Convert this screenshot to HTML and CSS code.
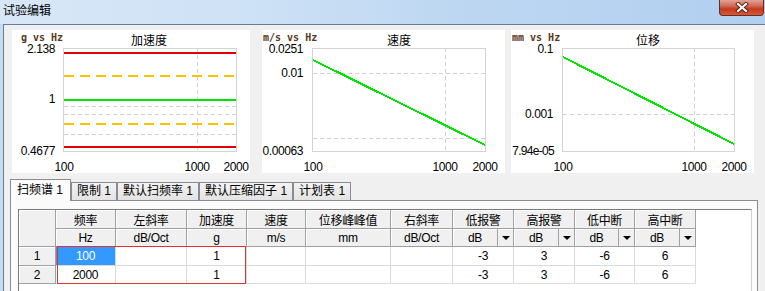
FILE: index.html
```html
<!DOCTYPE html>
<html lang="zh-CN">
<head>
    <meta charset="UTF-8">
    <title>试验编辑</title>
    <link rel="stylesheet" href="styles.css">
</head>
<body>

<div class="window">
    <div class="titlebar">
        <span class="title">试验编辑</span>
        <div class="close">
            <svg width="16" height="11" viewBox="0 0 16 11">
                <path d="M4 2 L12 9 M12 2 L4 9" stroke="#5a2018" stroke-width="4" stroke-linecap="square"/>
                <path d="M4 2 L12 9 M12 2 L4 9" stroke="#fff" stroke-width="2.2" stroke-linecap="square"/>
            </svg>
        </div>
    </div>

    <div class="client">
        <div class="charts">
            <!-- acceleration -->
            <div class="chart chart-acc">
                <svg width="238" height="143">
                    <text class="unit" x="9" y="11">g vs Hz</text>
                    <text class="ctitle" x="137" y="15">加速度</text>
                    <g class="grid-lines">
                        <line x1="185.5" y1="18" x2="185.5" y2="121" class="dash"/>
                        <line x1="52" y1="76.5" x2="224" y2="76.5" class="dash"/>
                        <line x1="52" y1="84.5" x2="224" y2="84.5" class="dash"/>
                        <line x1="52" y1="104.5" x2="224" y2="104.5" class="dash"/>
                    </g>
                    <rect x="51.5" y="18.5" width="173" height="103" class="frame"/>
                    <line x1="52" y1="23" x2="224" y2="23" class="limit"/>
                    <line x1="52" y1="117" x2="224" y2="117" class="limit"/>
                    <line x1="52" y1="46" x2="224" y2="46" class="alarm"/>
                    <line x1="52" y1="94" x2="224" y2="94" class="alarm"/>
                    <line x1="52" y1="70" x2="224" y2="70" class="profile"/>
                    <text class="ylabel" x="43" y="23">2.138</text>
                    <text class="ylabel" x="43" y="73">1</text>
                    <text class="ylabel" x="43" y="125">0.4677</text>
                    <text class="xlabel" x="52" y="141">100</text>
                    <text class="xlabel" x="185" y="141">1000</text>
                    <text class="xlabel" x="224" y="141">2000</text>
                </svg>
            </div>

            <!-- velocity -->
            <div class="chart chart-vel">
                <svg width="243" height="143">
                    <text class="unit" x="1" y="11">m/s vs Hz</text>
                    <text class="ctitle" x="137" y="15">速度</text>
                    <line x1="183.5" y1="18" x2="183.5" y2="121" class="dash"/>
                    <line x1="51" y1="43.5" x2="223" y2="43.5" class="dash"/>
                    <line x1="51" y1="108.5" x2="223" y2="108.5" class="dash"/>
                    <rect x="50.5" y="18.5" width="173" height="103" class="frame"/>
                    <line x1="51" y1="30" x2="223" y2="115" class="profile slope"/>
                    <text class="ylabel" x="41" y="23">0.0251</text>
                    <text class="ylabel" x="41" y="47">0.01</text>
                    <text class="ylabel" x="41" y="125">0.00063</text>
                    <text class="xlabel" x="51" y="141">100</text>
                    <text class="xlabel" x="183" y="141">1000</text>
                    <text class="xlabel" x="223" y="141">2000</text>
                </svg>
            </div>

            <!-- displacement -->
            <div class="chart chart-disp">
                <svg width="243" height="143">
                    <text class="unit" x="1" y="11">mm vs Hz</text>
                    <text class="ctitle" x="137" y="15">位移</text>
                    <line x1="183.5" y1="18" x2="183.5" y2="121" class="dash"/>
                    <line x1="52" y1="84.5" x2="223" y2="84.5" class="dash"/>
                    <rect x="51.5" y="18.5" width="172" height="103" class="frame"/>
                    <line x1="52" y1="27" x2="223" y2="114" class="profile slope"/>
                    <text class="ylabel" x="42" y="23">0.1</text>
                    <text class="ylabel" x="42" y="88">0.001</text>
                    <text class="ylabel tight" x="43" y="125">7.94e-05</text>
                    <text class="xlabel" x="52" y="141">100</text>
                    <text class="xlabel" x="183" y="141">1000</text>
                    <text class="xlabel" x="223" y="141">2000</text>
                </svg>
            </div>
        </div>

        <div class="tabs">
            <div class="tab active">扫频谱 1</div>
            <div class="tab">限制 1</div>
            <div class="tab">默认扫频率 1</div>
            <div class="tab">默认压缩因子 1</div>
            <div class="tab">计划表 1</div>
        </div>

        <div class="tabpage">
            <div class="sheet">
                <div class="cell head corner"></div>
                <div class="cell head">频率</div>
                <div class="cell head">左斜率</div>
                <div class="cell head">加速度</div>
                <div class="cell head">速度</div>
                <div class="cell head">位移峰峰值</div>
                <div class="cell head">右斜率</div>
                <div class="cell head">低报警</div>
                <div class="cell head">高报警</div>
                <div class="cell head">低中断</div>
                <div class="cell head">高中断</div>

                <div class="cell head">Hz</div>
                <div class="cell head">dB/Oct</div>
                <div class="cell head">g</div>
                <div class="cell head">m/s</div>
                <div class="cell head">mm</div>
                <div class="cell head">dB/Oct</div>
                <div class="cell head drop-cell"><span>dB</span><i class="drop"></i></div>
                <div class="cell head drop-cell"><span>dB</span><i class="drop"></i></div>
                <div class="cell head drop-cell"><span>dB</span><i class="drop"></i></div>
                <div class="cell head drop-cell"><span>dB</span><i class="drop"></i></div>

                <div class="cell head rowhead">1</div>
                <div class="cell selected">100</div>
                <div class="cell"></div>
                <div class="cell">1</div>
                <div class="cell"></div>
                <div class="cell"></div>
                <div class="cell"></div>
                <div class="cell">-3</div>
                <div class="cell">3</div>
                <div class="cell">-6</div>
                <div class="cell">6</div>

                <div class="cell head rowhead">2</div>
                <div class="cell">2000</div>
                <div class="cell"></div>
                <div class="cell">1</div>
                <div class="cell"></div>
                <div class="cell"></div>
                <div class="cell"></div>
                <div class="cell">-3</div>
                <div class="cell">3</div>
                <div class="cell">-6</div>
                <div class="cell">6</div>

                <div class="selection"></div>
            </div>
        </div>
    </div>
</div>

</body>
</html>
```

FILE: styles.css
```css
body {
    margin: 0;
    font-family: "Liberation Sans", "Noto Sans CJK SC", sans-serif;
    font-size: 12px;
    color: #000;
}
.window {
    width: 765px;
    height: 291px;
    overflow: hidden;
    background: #c8dcf1;
}
.titlebar {
    height: 24px;
    display: flex;
    justify-content: space-between;
    align-items: flex-start;
    background: linear-gradient(to right, #d8e7f7 0%, #cfe2f6 30%, #bdd7f2 60%, #b2cff0 100%);
}
.title {
    font-family: "Noto Sans CJK SC", sans-serif;
    font-size: 12px;
    line-height: 20px;
    padding-left: 3px;
}
.close {
    width: 43px;
    height: 15px;
    margin-right: 1px;
    border: 1px solid #6b2a20;
    border-top: none;
    border-radius: 0 0 4px 4px;
    background: linear-gradient(#e3a294 0%, #d26a56 40%, #c2391f 60%, #d9583a 100%);
    display: flex;
    align-items: center;
    justify-content: center;
}
.client {
    margin-left: 3px;
    height: 267px;
    border-left: 1px solid #6c7d90;
    border-top: 1px solid #6c7d90;
    background: #f0f0f0;
}

/* charts */
.charts {
    display: flex;
    padding: 5px 0 0 8px;
}
.chart {
    height: 143px;
    background: #fff;
}
.chart svg {
    display: block;
}
.chart-vel {
    margin-left: 12px;
}
.chart-disp {
    margin-left: 6px;
}
.unit {
    font-family: "DejaVu Sans Mono", monospace;
    font-size: 10px;
    font-weight: bold;
    fill: #5a3818;
}
.ctitle {
    font-family: "Noto Sans CJK SC", sans-serif;
    font-size: 12px;
    text-anchor: middle;
}
.ylabel {
    font-size: 12px;
    letter-spacing: -0.4px;
    text-anchor: end;
}
.ylabel.tight {
    letter-spacing: -0.7px;
}
.xlabel {
    font-size: 12px;
    letter-spacing: -0.4px;
    text-anchor: middle;
}
.frame {
    fill: none;
    stroke: #d4d4d4;
    shape-rendering: crispEdges;
}
.dash {
    stroke: #d2d2d2;
    stroke-dasharray: 4 3;
    shape-rendering: crispEdges;
}
.limit {
    stroke: #e00000;
    stroke-width: 2;
    shape-rendering: crispEdges;
}
.alarm {
    stroke: #ffc000;
    stroke-width: 2;
    stroke-dasharray: 10 6;
    shape-rendering: crispEdges;
}
.profile {
    stroke: #00e600;
    stroke-width: 2;
    shape-rendering: crispEdges;
}

/* tabs */
.tabs {
    display: flex;
    align-items: flex-end;
    height: 22px;
    margin: 5px 0 0 6px;
    position: relative;
    z-index: 1;
}
.tab {
    height: 17px;
    line-height: 17px;
    padding: 0 5px;
    border: 1px solid #898c95;
    border-bottom: none;
    background: linear-gradient(#f3f3f3, #e3e3e3);
    font-family: "Liberation Sans", "Noto Sans CJK SC", sans-serif;
    font-size: 12px;
    white-space: nowrap;
}
.tab.active {
    height: 21px;
    line-height: 20px;
    padding: 0 7px 0 6px;
    margin-bottom: -1px;
    background: #fbfbfb;
}
.tabpage {
    box-sizing: border-box;
    width: 748px;
    height: 120px;
    margin-left: 6px;
    padding: 8px 0 0 7px;
    border: 1px solid #898c95;
    background: #fbfbfb;
}

/* data sheet */
.sheet {
    position: relative;
    box-sizing: border-box;
    width: 734px;
    height: 110px;
    display: grid;
    grid-template-columns: 37px 60px 71px 60px 59px 85px 62px 61px 61px 60px 61px;
    grid-template-rows: 19px 18px 19px 18px;
    align-content: start;
    border-top: 1px solid #7a7a7a;
    border-left: 1px solid #7a7a7a;
    border-right: 1px solid #d0d0d0;
    background: #fff;
}
.cell {
    box-sizing: border-box;
    display: flex;
    align-items: center;
    justify-content: center;
    border-right: 1px solid #dadada;
    border-bottom: 1px solid #dadada;
    font-size: 12px;
    letter-spacing: -0.3px;
}
.cell.head {
    background: #f0f0f0;
    border-color: #a0a0a0;
    box-shadow: inset 1px 1px #fff;
    font-family: "Liberation Sans", "Noto Sans CJK SC", sans-serif;
}
.corner {
    grid-row: span 2;
}
.drop-cell {
    justify-content: space-between;
}
.drop-cell span {
    flex: 1;
    text-align: center;
}
.drop {
    align-self: stretch;
    width: 15px;
    border-left: 1px solid #a0a0a0;
    display: flex;
    align-items: center;
    justify-content: center;
}
.drop::after {
    content: "";
    border-left: 4px solid transparent;
    border-right: 4px solid transparent;
    border-top: 4px solid #000;
}
.cell.selected {
    background: #3399ff;
    color: #fff;
}
.selection {
    position: absolute;
    left: 38px;
    top: 36px;
    width: 189px;
    height: 38px;
    border: 1px solid #e5302c;
    box-sizing: border-box;
    pointer-events: none;
}
```
